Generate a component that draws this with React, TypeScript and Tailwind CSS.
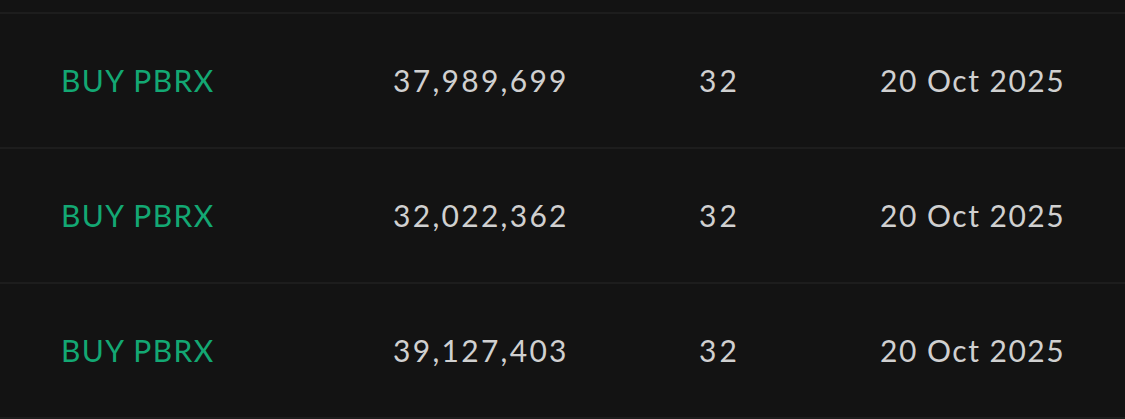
import React from "react";

const rows = [
  { name: "BUY PBRX", qty: "37,989,699", n: "32", date: "20 Oct 2025" },
  { name: "BUY PBRX", qty: "32,022,362", n: "32", date: "20 Oct 2025" },
  { name: "BUY PBRX", qty: "39,127,403", n: "32", date: "20 Oct 2025" },
];

export default function App() {
  return (
    <div
      className="w-[1125px] h-[419px] overflow-hidden bg-[#131313]"
      style={{ fontFamily: "Lato, 'Noto Sans', sans-serif" }}
    >
      <div className="h-[12px]" />
      {rows.map((r, i) => (
        <div
          key={i}
          className="h-[135px] border-t-2 border-[#1d1d1d] flex items-center text-[30px] text-[#d0d0d0]"
        >
          <div className="w-[393px] pl-[61px] text-[#13a873] tracking-[1.4px]">{r.name}</div>
          <div className="w-[306px] tracking-[2.3px]">{r.qty}</div>
          <div className="w-[181px] tracking-[3px]">{r.n}</div>
          <div className="tracking-[1.5px]">{r.date}</div>
        </div>
      ))}
      <div className="border-t-2 border-[#1d1d1d]" />
    </div>
  );
}
